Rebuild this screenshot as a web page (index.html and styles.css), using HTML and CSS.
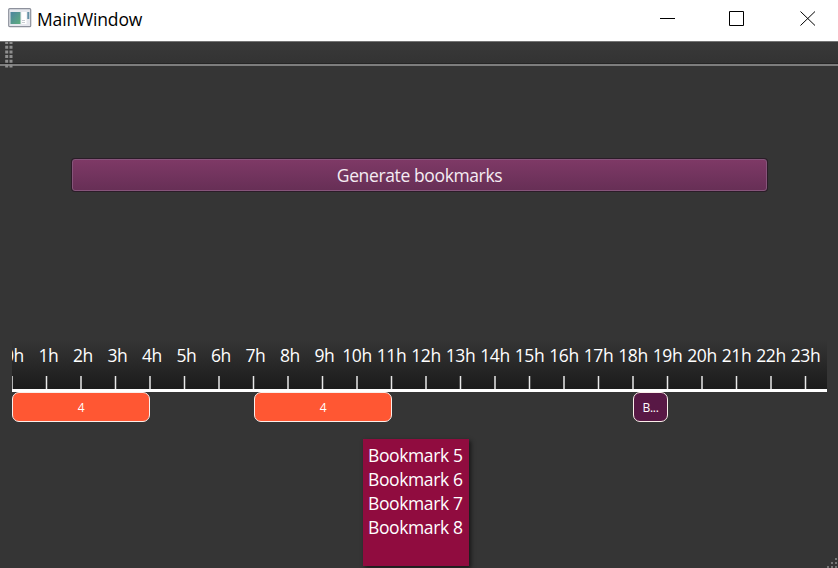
FILE: index.html
```html
<!DOCTYPE html>
<html lang="en">
<head>
<meta charset="utf-8">
<title>MainWindow</title>
<link rel="stylesheet" href="styles.css">
</head>
<body>
<header class="titlebar">
  <svg class="app-icon" width="24" height="20" viewBox="0 0 24 20">
    <defs><linearGradient id="pane" x1="0" y1="0" x2="1" y2="1"><stop offset="0" stop-color="#4b83a0"/><stop offset="1" stop-color="#5fae7e"/></linearGradient></defs>
    <rect x=".7" y=".7" width="22" height="18" rx="1" fill="#e6e8ee" stroke="#8d919c" stroke-width="1.2"/>
    <rect x="2.5" y="4" width="10" height="12" fill="url(#pane)"/>
    <rect x="13.5" y="4" width="5" height="12" fill="#fff"/>
    <rect x="19.3" y="4" width="2" height="7" fill="#6491a5"/>
    <path d="M14 12.5h3M14 14.5h3" stroke="#c7ccd2"/>
  </svg>
  <h1 class="title">MainWindow</h1>
  <div class="controls">
    <svg width="16" height="16" viewBox="0 0 16 16"><path d="M0 8.5h15"/></svg>
    <svg width="16" height="16" viewBox="0 0 16 16"><path d="M.5 1.5h14v14H.5z"/></svg>
    <svg width="16" height="16" viewBox="0 0 16 16"><path d="M.5 1.5l14.5 14M15 1.5L.5 15.5"/></svg>
  </div>
</header>
<div class="toolbar">
  <svg class="grip" width="8" height="26" viewBox="0 0 8 26"><path d="M1.7 0v26M6 0v26"/></svg>
</div>
<main class="content">
  <button class="generate"><span>Generate bookmarks</span></button>
  <section class="timeline">
    <div class="hours">
      <span class="one">0h</span><span class="one">1h</span><span class="one">2h</span><span class="one">3h</span><span class="one">4h</span><span class="one">5h</span><span class="one">6h</span><span class="one">7h</span><span class="one">8h</span><span class="one">9h</span><span>10h</span><span>11h</span><span>12h</span><span>13h</span><span>14h</span><span>15h</span><span>16h</span><span>17h</span><span>18h</span><span>19h</span><span>20h</span><span>21h</span><span>22h</span><span>23h</span>
    </div>
    <svg class="ticks" width="815" height="13" viewBox="0 0 815 13"><path d="M0 0v13M34.5 0v13M69 0v13M103.5 0v13M138 0v13M172.5 0v13M207 0v13M241.5 0v13M276 0v13M310.5 0v13M345 0v13M379.5 0v13M414 0v13M448.5 0v13M483 0v13M517.5 0v13M552 0v13M586.5 0v13M621 0v13M655.5 0v13M690 0v13M724.5 0v13M759 0v13M793.5 0v13"/></svg>
  </section>
  <div class="bookmarks">
    <div class="mark group first">4</div>
    <div class="mark group second">4</div>
    <div class="mark single">B...</div>
  </div>
  <ul class="popup"><li>Bookmark 5</li><li>Bookmark 6</li><li>Bookmark 7</li><li>Bookmark 8</li></ul>
</main>
<svg class="sizegrip" width="12" height="12" viewBox="0 0 12 12"><path d="M9 2h2v2H9zM5 6h2v2H5zM9 6h2v2H9zM1 10h2v2H1zM5 10h2v2H5zM9 10h2v2H9z"/></svg>
</body>
</html>
```

FILE: styles.css
```css
* { box-sizing: border-box; }
body {
  margin: 0;
  width: 838px;
  height: 568px;
  overflow: hidden;
  position: relative;
  display: flex;
  flex-direction: column;
  background: #353535;
  color: #fff;
  font-family: "Open Sans", "Noto Sans", sans-serif;
}
.titlebar {
  height: 41px;
  flex: none;
  display: flex;
  align-items: flex-start;
  background: #fff;
  color: #000;
  padding: 8px 22px 0 8px;
}
.title {
  margin: 0 0 0 5px;
  font-size: 17.5px;
  letter-spacing: -0.15px;
  font-weight: 400;
  line-height: 22px;
}
.controls { margin: 2px 0 0 auto; display: flex; gap: 54px; }
.controls svg { fill: none; stroke: #000; stroke-width: 1; }
.controls svg:first-child { margin-right: -1px; }
.controls svg:last-child { margin-left: 1px; }
.toolbar {
  height: 25px;
  flex: none;
  border-top: 1px solid #747474;
  border-bottom: 2px solid #7d7d7d;
  background: linear-gradient(#393939, #333 95%, #252525 96%);
  padding-left: 5px;
}
.grip { display: block; position: relative; fill: none; stroke: #8e8e8e; stroke-width: 3; stroke-dasharray: 3 1.7; stroke-dashoffset: 1; }
.content { display: flex; flex-direction: column; padding-left: 12px; }
.generate {
  margin: 93px 0 0 60px;
  width: 695px;
  height: 32px;
  border: 1px solid #86547a;
  border-radius: 3px;
  box-shadow: 0 0 0 1px #2b1c28;
  background: linear-gradient(#7e3966, #672f56);
  color: #f5ecf3;
  font: 17.5px/30px "Open Sans", sans-serif;
  letter-spacing: -0.38px;
  padding: 0;
  text-align: center;
}
.timeline {
  margin-top: 149px;
  width: 815px;
  height: 52px;
  overflow: hidden;
  border-bottom: 3px solid #fff;
  background: linear-gradient(#353535, #1b1b1b);
}
.hours {
  display: grid;
  grid-template-columns: repeat(24, 34.5px);
  margin-left: -17.25px;
  height: 36px;
  font-size: 17.5px;
  letter-spacing: -0.35px;
  line-height: 31px;
  text-align: center;
  white-space: nowrap;
}
.hours .one { padding-left: 4px; }
.ticks { display: block; overflow: visible; stroke: #e8e8e8; stroke-width: 1.5; }
.bookmarks {
  display: grid;
  grid-template-columns: 138px 104px 138px 241px 35px;
  grid-template-rows: 30px;
  height: 30px;
}
.mark {
  border: 1px solid #fbeeea;
  border-radius: 7px;
  text-align: center;
  font-size: 12px;
  letter-spacing: -0.3px;
  line-height: 30px;
}
.group { background: #ff5733; }
.second { grid-column: 3; }
.single { grid-column: 5; background: #581845; }
.popup {
  list-style: none;
  margin: 17px 0 0 351px;
  width: 106px;
  height: 127px;
  padding: 4px 0 0 5px;
  background: #900c3f;
  box-shadow: 2px 2px 4px #181818;
  font-size: 17.5px;
  letter-spacing: -0.38px;
  line-height: 24px;
  white-space: nowrap;
}
.sizegrip { position: absolute; right: 0; bottom: 0; fill: #777; }
```
